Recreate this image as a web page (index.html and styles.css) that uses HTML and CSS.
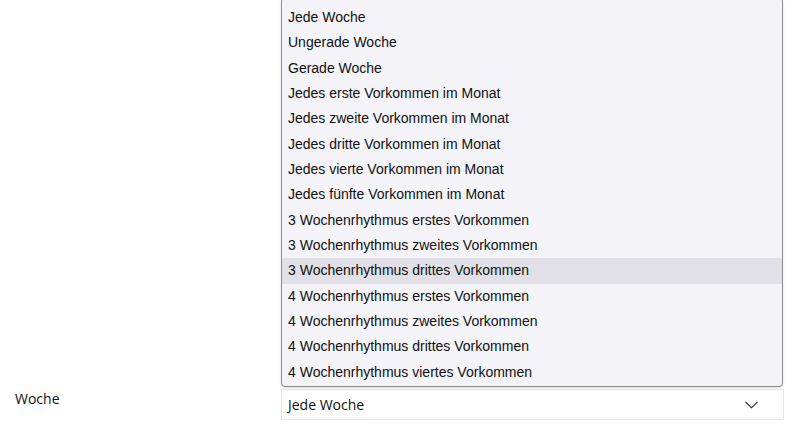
FILE: index.html
```html
<!DOCTYPE html>
<html lang="de">
<head>
<meta charset="utf-8">
<title>Woche</title>
<link rel="stylesheet" href="styles.css">
</head>
<body>
<div class="page">
  <div class="form-row">
    <label class="label">Woche</label>
    <div class="select-wrap">
      <div class="select">
        <span class="select-value">Jede Woche</span>
        <svg class="chevron" width="13" height="8" viewBox="0 0 13 8"><path d="M0.5 0.8 L6.5 6.8 L12.5 0.8" fill="none" stroke="#222" stroke-width="1.1"/></svg>
      </div>
      <ul class="listbox">
        <li class="option">Jede Woche</li>
        <li class="option">Ungerade Woche</li>
        <li class="option">Gerade Woche</li>
        <li class="option">Jedes erste Vorkommen im Monat</li>
        <li class="option">Jedes zweite Vorkommen im Monat</li>
        <li class="option">Jedes dritte Vorkommen im Monat</li>
        <li class="option">Jedes vierte Vorkommen im Monat</li>
        <li class="option">Jedes fünfte Vorkommen im Monat</li>
        <li class="option">3 Wochenrhythmus erstes Vorkommen</li>
        <li class="option">3 Wochenrhythmus zweites Vorkommen</li>
        <li class="option option-hover">3 Wochenrhythmus drittes Vorkommen</li>
        <li class="option">4 Wochenrhythmus erstes Vorkommen</li>
        <li class="option">4 Wochenrhythmus zweites Vorkommen</li>
        <li class="option">4 Wochenrhythmus drittes Vorkommen</li>
        <li class="option">4 Wochenrhythmus viertes Vorkommen</li>
      </ul>
    </div>
  </div>
</div>
</body>
</html>
```
FILE: styles.css
```css
html, body {
  margin: 0;
  padding: 0;
  background: #ffffff;
}
.page {
  height: 437px;
  display: flex;
  flex-direction: column;
  justify-content: flex-end;
  padding-bottom: 17px;
  box-sizing: border-box;
  overflow: hidden;
}
.form-row {
  display: flex;
  align-items: center;
}
.label {
  flex: 0 0 281px;
  padding-left: 15px;
  box-sizing: border-box;
  font-family: "Open Sans", sans-serif;
  font-size: 14px;
  color: #111;
  position: relative;
  top: -6px;
}
.select-wrap {
  position: relative;
  flex: 0 0 503px;
}
.select {
  height: 31px;
  box-sizing: border-box;
  border: 1px solid #e6e6e6;
  background: #fff;
  display: flex;
  align-items: center;
  justify-content: space-between;
  padding: 0 25px 0 6px;
  font-family: "Open Sans", sans-serif;
  font-size: 14px;
  color: #111;
}
.chevron {
  display: block;
}
.listbox {
  position: absolute;
  left: 0;
  right: 1px;
  bottom: calc(100% + 2px);
  margin: 0;
  padding: 7px 0 1px 0;
  list-style: none;
  background: #f3f3f8;
  border: 1px solid #8e8e8e;
  border-radius: 4px;
  box-shadow: 0 1px 2px rgba(0,0,0,0.15);
}
.option {
  height: 25.33px;
  line-height: 25.33px;
  padding-left: 6px;
  font-family: "Liberation Sans", Arial, sans-serif;
  font-size: 14px;
  color: #111;
  white-space: nowrap;
}
.option-hover {
  background: #e0e0e6;
}
```
